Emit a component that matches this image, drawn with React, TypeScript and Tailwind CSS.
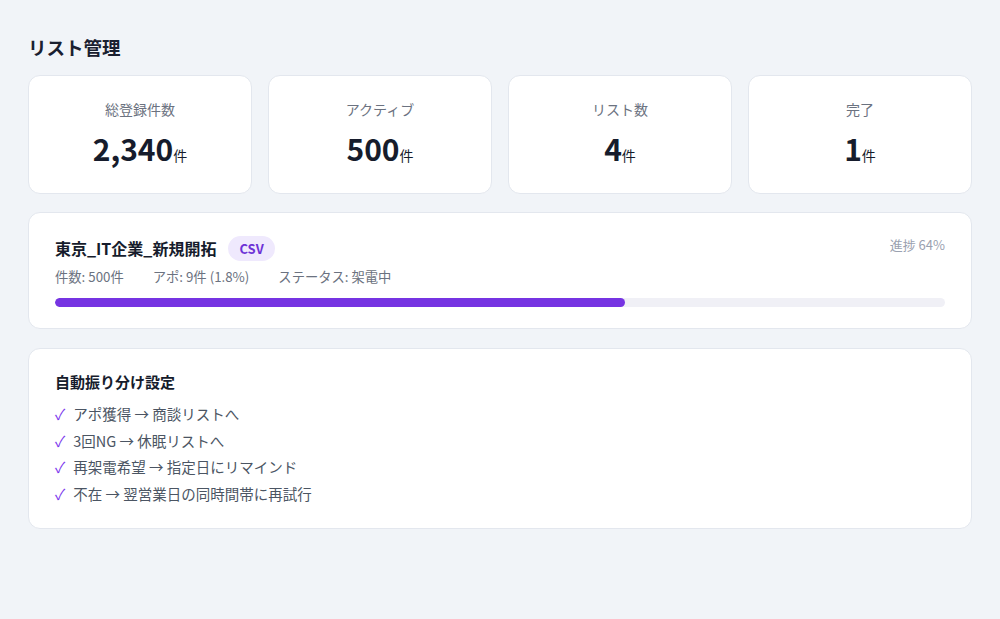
import React from 'react'

const stats = [
  { label: '総登録件数', value: '2,340' },
  { label: 'アクティブ', value: '500' },
  { label: 'リスト数', value: '4' },
  { label: '完了', value: '1' },
]

const rules = [
  'アポ獲得 → 商談リストへ',
  '3回NG → 休眠リストへ',
  '再架電希望 → 指定日にリマインド',
  '不在 → 翌営業日の同時間帯に再試行',
]

export default function App() {
  const progress = 64
  return (
    <div
      className="min-h-screen w-full bg-[#f1f4f8] px-7 pt-[34px]"
      style={{ fontFamily: '"Noto Sans CJK JP", "Noto Sans", sans-serif' }}
    >
      <h1 className="text-[18.5px] font-bold text-[#1a2030] leading-[26px]">リスト管理</h1>

      {/* Stats */}
      <div className="grid grid-cols-4 gap-4 mt-[15px]">
        {stats.map(s => (
          <div key={s.label} className="h-[119px] rounded-xl bg-white border border-[#e3e7ee] flex flex-col items-center pt-[23px]">
            <p className="text-[14px] text-[#6b7280] leading-[20px]">{s.label}</p>
            <p className="mt-[9px] text-[#161c2c] font-bold leading-[40px]">
              <span className="text-[30px]">{s.value}</span>
              <span className="text-[14px] font-normal">件</span>
            </p>
          </div>
        ))}
      </div>

      {/* List card */}
      <div className="mt-[18px] rounded-xl bg-white border border-[#e3e7ee] px-[26px] pt-[22px] pb-[21px]">
        <div className="flex items-start justify-between">
          <div className="flex items-center gap-[12px]">
            <h2 className="text-[16px] font-bold text-[#161c2c] leading-[26px]">東京_IT企業_新規開拓</h2>
            <span className="rounded-full bg-[#efe9fd] px-[11px] py-[3px] text-[13px] font-bold text-[#6d32d6] leading-[19px]">CSV</span>
          </div>
          <span className="text-[13px] text-[#9aa1b0] leading-[20px]">進捗 {progress}%</span>
        </div>
        <div className="mt-[6px] flex gap-[29px] text-[13.3px] text-[#6b7280] leading-[20px]">
          <span>件数: 500件</span>
          <span>アポ: 9件 (1.8%)</span>
          <span>ステータス: 架電中</span>
        </div>
        <div className="mt-[11px] h-[9px] w-full rounded-full bg-[#f0f0f6] overflow-hidden">
          <div className="h-full rounded-full bg-[#7634e2]" style={{ width: `${progress}%` }} />
        </div>
      </div>

      {/* Rules card */}
      <div className="mt-[19px] rounded-xl bg-white border border-[#e3e7ee] px-[26px] pt-[22px] pb-[21px]">
        <h3 className="text-[15px] font-bold text-[#161c2c] leading-[22px]">自動振り分け設定</h3>
        <ul className="mt-[8px] flex flex-col">
          {rules.map(r => (
            <li key={r} className="flex items-center gap-[8px] text-[14.5px] text-[#4b5563] leading-[26.5px]">
              <span className="text-[#7c3aed] text-[15px]">✓</span>
              <span>{r}</span>
            </li>
          ))}
        </ul>
      </div>
    </div>
  )
}
